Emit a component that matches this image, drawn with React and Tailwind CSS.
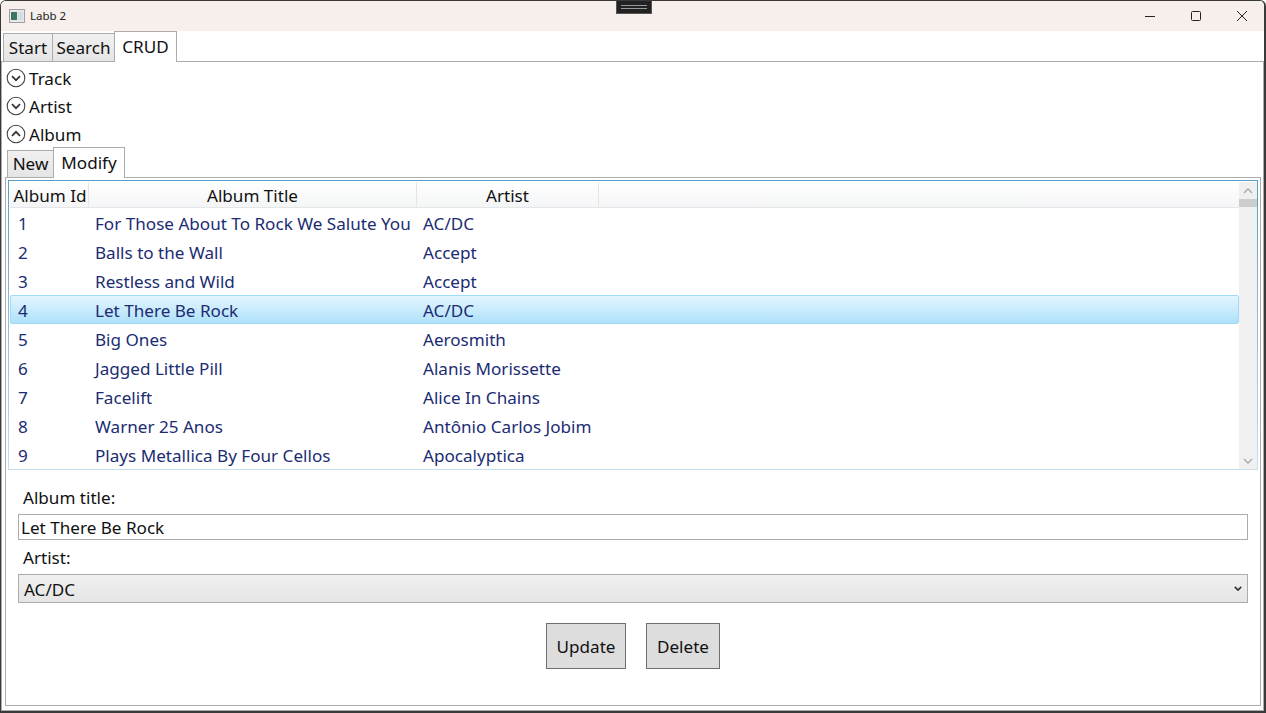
import React from "react";

const rows = [
  ["1", "For Those About To Rock We Salute You", "AC/DC"],
  ["2", "Balls to the Wall", "Accept"],
  ["3", "Restless and Wild", "Accept"],
  ["4", "Let There Be Rock", "AC/DC"],
  ["5", "Big Ones", "Aerosmith"],
  ["6", "Jagged Little Pill", "Alanis Morissette"],
  ["7", "Facelift", "Alice In Chains"],
  ["8", "Warner 25 Anos", "Antônio Carlos Jobim"],
  ["9", "Plays Metallica By Four Cellos", "Apocalyptica"],
];

function Expander({ label, up }) {
  return (
    <div className="flex items-center h-[28px] pl-[4px]">
      <svg width="20" height="20" viewBox="0 0 20 20" className="shrink-0">
        <circle cx="10" cy="10" r="8.8" fill="white" stroke="#444" strokeWidth="1.1" />
        <path d={up ? "M6 11.8 L10 7.8 L14 11.8" : "M6 8.2 L10 12.2 L14 8.2"} fill="none" stroke="#333" strokeWidth="1.7" />
      </svg>
      <span className="ml-[3px] pt-[1px]">{label}</span>
    </div>
  );
}

function Chevron({ up, color, w = 10, h = 6, sw = 1.3 }) {
  return (
    <svg width={w} height={h} viewBox="0 0 10 6">
      <path d={up ? "M1 5 L5 1 L9 5" : "M1 1 L5 5 L9 1"} fill="none" stroke={color} strokeWidth={sw} />
    </svg>
  );
}

export default function App() {
  return (
    <div className="relative w-[1266px] h-[713px] overflow-hidden bg-white text-[17.1px] leading-[24px] text-[#111] font-['Noto_Sans','Open_Sans',sans-serif] border-t border-l border-r-2 border-b-2 border-[#3a3a3a] flex flex-col rounded-t-[6px]">
      <div className="absolute left-[615px] top-[-1px] w-[36px] h-[14px] bg-[#222] border border-[#555] flex flex-col items-center justify-center gap-[2px]">
        <div className="w-[26px] h-px bg-[#999]" />
        <div className="w-[26px] h-px bg-[#999]" />
      </div>

      <div className="h-[30px] shrink-0 bg-[#f7efec] flex items-center">
        <svg width="16" height="14" viewBox="0 0 16 14" className="ml-[8px] shrink-0">
          <rect x="0.5" y="0.5" width="15" height="13" fill="#e8e8e8" stroke="#a0a0a0" />
          <rect x="2" y="3" width="6" height="8" fill="#3d7468" />
          <rect x="9" y="3" width="5" height="8" fill="#cfe0e8" />
        </svg>
        <span className="ml-[5px] text-[11.5px] text-[#222]">Labb 2</span>
        <div className="ml-auto flex items-center text-[#111]">
          <div className="w-[46px] flex justify-center">
            <svg width="12" height="12" viewBox="0 0 12 12"><path d="M1 6.5 H11" stroke="#222" strokeWidth="1" /></svg>
          </div>
          <div className="w-[46px] flex justify-center">
            <svg width="12" height="12" viewBox="0 0 12 12"><rect x="1.5" y="1.5" width="9" height="9" rx="1" fill="none" stroke="#222" strokeWidth="1" /></svg>
          </div>
          <div className="w-[45px] flex justify-center">
            <svg width="12" height="12" viewBox="0 0 12 12"><path d="M1 1 L11 11 M11 1 L1 11" stroke="#222" strokeWidth="1" /></svg>
          </div>
        </div>
      </div>

      <div className="h-[30px] shrink-0 flex items-end pl-[2px] relative z-10">
        <div className="h-[29px] w-[50px] flex items-center justify-center bg-gradient-to-b from-[#f0f0f0] to-[#e5e5e5] border border-[#acacac] -mb-px">Start</div>
        <div className="h-[29px] w-[62px] flex items-center justify-center bg-gradient-to-b from-[#f0f0f0] to-[#e5e5e5] border border-[#acacac] border-l-0 -mb-px">Search</div>
        <div className="h-[31px] w-[63px] -ml-px flex items-center justify-center bg-white border border-[#acacac] border-b-0 -mb-px text-[#111]">CRUD</div>
      </div>

      <div className="flex-1 min-h-0 border border-[#acacac] flex flex-col pt-[2px]">
        <Expander label="Track" />
        <Expander label="Artist" />
        <Expander label="Album" up />

        <div className="h-[30px] mt-[-1px] shrink-0 flex items-end pl-[5px] relative z-10">
          <div className="h-[28px] w-[47px] flex items-center justify-center bg-gradient-to-b from-[#f0f0f0] to-[#e5e5e5] border border-[#acacac] -mb-px">New</div>
          <div className="h-[31px] w-[72px] -ml-px flex items-center justify-center bg-white border border-[#acacac] border-b-0 -mb-px">Modify</div>
        </div>

        <div className="flex-1 min-h-0 border border-[#acacac] ml-[3px] mr-[2px] mb-[4px] flex flex-col">
          <div className="mt-[2px] ml-[2px] mr-[2px] h-[290px] shrink-0 border border-[#82b9da] [border-image:linear-gradient(to_bottom,#569dc9,#c5dfee)_1] flex pl-px pt-px">
            <div className="flex-1 min-w-0 flex flex-col">
              <div className="h-[26px] shrink-0 flex items-center bg-gradient-to-b from-white to-[#f4f5f6] border-b border-[#e5e5e5]">
                <div className="w-[79px] h-full flex items-center justify-center border-r border-[#e5e5e5] whitespace-nowrap overflow-hidden pl-[2px] pt-[2px]">Album Id</div>
                <div className="w-[328px] h-full flex items-center justify-center border-r border-[#e5e5e5] pt-[2px]">Album Title</div>
                <div className="w-[182px] h-full flex items-center justify-center border-r border-[#e5e5e5] pt-[2px]">Artist</div>
              </div>
              {rows.map((r) => {
                const sel = r[0] === "4";
                return (
                  <div
                    key={r[0]}
                    className={
                      "h-[29px] shrink-0 flex items-center pt-[2px] text-[#1b2c72] border rounded-[2px] " +
                      (sel
                        ? "bg-gradient-to-b from-[#e4f5fe] to-[#aee1fb] border-[#9fdcf9]"
                        : "border-transparent")
                    }
                  >
                    <div className="w-[78px] pl-[7px] shrink-0">{r[0]}</div>
                    <div className="w-[328px] pl-[6px] shrink-0 whitespace-nowrap">{r[1]}</div>
                    <div className="pl-[6px] whitespace-nowrap">{r[2]}</div>
                  </div>
                );
              })}
            </div>
            <div className="w-[18px] shrink-0 bg-[#f0f0f0] flex flex-col items-center">
              <div className="h-[17px] flex items-center justify-center shrink-0"><Chevron up color="#a6a6a6" /></div>
              <div className="h-[8px] w-full bg-[#cdcdcd] shrink-0" />
              <div className="flex-1" />
              <div className="h-[17px] flex items-center justify-center shrink-0"><Chevron color="#a6a6a6" /></div>
            </div>
          </div>

          <div className="pl-[12px] pr-[12px] flex flex-col">
            <div className="pl-[5px] h-[30px] mt-[13px] flex items-center">Album title:</div>
            <div className="h-[26px] mt-[1px] border border-[#acacac] flex items-center pl-[2px] pt-[1px]">Let There Be Rock</div>
            <div className="pl-[5px] h-[30px] mt-[3px] flex items-center">Artist:</div>
            <div className="h-[29px] mt-px border border-[#acacac] bg-gradient-to-b from-[#f0f0f0] to-[#e5e5e5] flex items-center pl-[5px] pr-[5px] justify-between">
              <span className="pt-[2px]">AC/DC</span>
              <Chevron color="#333" w={8} h={5} sw={2} />
            </div>
            <div className="flex justify-center gap-[20px] mt-[20px]">
              <div className="w-[80px] h-[46px] bg-[#dddddd] border border-[#707070] flex items-center justify-center pt-[2px]">Update</div>
              <div className="w-[74px] h-[46px] bg-[#dddddd] border border-[#707070] flex items-center justify-center pt-[2px]">Delete</div>
            </div>
          </div>
        </div>
      </div>
    </div>
  );
}
